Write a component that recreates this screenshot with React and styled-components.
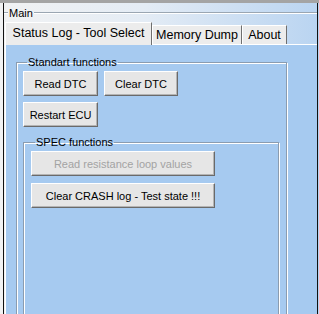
import styled, { createGlobalStyle } from "styled-components";

const GlobalStyle = createGlobalStyle`
    html, body {
        margin: 0;
        padding: 0;
        background: #f0f0f0;
    }
    body {
        font-family: "Liberation Sans", Arial, sans-serif;
    }
`;

const App = () => {
    return (
        <Screen>
            <GlobalStyle />
            <Window>
                <MainHeader>
                    <HeaderLine $lead />
                    <HeaderLabel>Main</HeaderLabel>
                    <HeaderLine />
                </MainHeader>
                <TabStrip>
                    <Tab $active $w={147}>Status Log - Tool Select</Tab>
                    <Tab $w={90}>Memory Dump</Tab>
                    <Tab $w={45}>About</Tab>
                </TabStrip>
                <Panel>
                    <Group $w={271} $h={300}>
                        <Legend>Standart functions</Legend>
                        <ButtonRow>
                            <Button $w={75}>Read DTC</Button>
                            <Button $w={74}>Clear DTC</Button>
                        </ButtonRow>
                        <ButtonRow>
                            <Button $w={75}>Restart ECU</Button>
                        </ButtonRow>
                        <SubGroup $w={256} $h={200}>
                            <Legend>SPEC functions</Legend>
                            <ButtonStack>
                                <Button $w={184} disabled>Read resistance loop values</Button>
                                <Button $w={184}>Clear CRASH log - Test state !!!</Button>
                            </ButtonStack>
                        </SubGroup>
                    </Group>
                </Panel>
            </Window>
        </Screen>
    );
};

const Screen = styled.div`
    width: 319px;
    height: 314px;
    overflow: hidden;
    box-sizing: border-box;
    border-top: 3px solid #a4a4a4;
    background: linear-gradient(to right, #f1f2f3 0%, #e4ecf5 45%, #b9d4f1 100%);
`;

const Window = styled.div`
    margin-left: 3px;
    width: 315px;
    height: 311px;
    box-sizing: border-box;
    border-left: 1px solid #111;
    border-right: 1px solid #111;
    display: flex;
    flex-direction: column;
`;

const MainHeader = styled.div`
    display: flex;
    align-items: center;
    height: 18px;
    padding-top: 2px;
    box-sizing: border-box;
`;

const HeaderLine = styled.div`
    flex: ${(p) => (p.$lead ? "0 0 4px" : "1")};
    height: 0;
    border-top: 1px solid #9aa6b2;
    border-bottom: 1px solid #ffffff;
`;

const HeaderLabel = styled.span`
    font-size: 11px;
    line-height: 13px;
    color: #000;
    padding: 0 1px;
`;

const TabStrip = styled.div`
    display: flex;
    align-items: flex-end;
    height: 22px;
    margin-top: 1px;
    padding-left: 1px;
    position: relative;
    z-index: 1;
`;

const Tab = styled.div`
    box-sizing: border-box;
    width: ${(p) => p.$w}px;
    height: ${(p) => (p.$active ? 23 : 19)}px;
    margin-bottom: ${(p) => (p.$active ? -1 : 0)}px;
    background: #ececec;
    border-top: 1px solid #ffffff;
    border-left: 1px solid #ffffff;
    border-right: 1px solid #6f6f6f;
    font-size: 12.5px;
    line-height: ${(p) => (p.$active ? 20 : 18)}px;
    color: #000;
    text-align: center;
    white-space: nowrap;
`;

const Panel = styled.div`
    flex: 1;
    margin-left: 1px;
    background: #a6caf0;
    border-left: 1px solid #ffffff;
    border-top: 1px solid #ffffff;
    padding: 12px 0 0 10px;
    overflow: hidden;
`;

const Group = styled.fieldset`
    margin: 0;
    box-sizing: border-box;
    width: ${(p) => p.$w}px;
    height: ${(p) => p.$h}px;
    min-width: 0;
    padding: 3px 6px 0 6px;
    border: 1px solid #8a9cb0;
    box-shadow: inset 1px 1px 0 #ffffff, 1px 1px 0 #ffffff;
`;

const SubGroup = styled(Group)`
    margin-top: 10px;
    padding: 3px 7px 0 7px;
`;

const Legend = styled.legend`
    font-size: 11px;
    line-height: 11px;
    color: #000;
    padding: 0 1px;
    margin-left: 4px;
`;

const ButtonRow = styled.div`
    display: flex;
    gap: 6px;
    margin-bottom: 6px;
`;

const ButtonStack = styled.div`
    display: flex;
    flex-direction: column;
    gap: 7px;
`;

const Button = styled.button`
    box-sizing: border-box;
    width: ${(p) => p.$w}px;
    height: 25px;
    margin: 0;
    padding: 0;
    background: #e6e6e6;
    border: 1px solid;
    border-color: #ffffff #6a6a6a #6a6a6a #ffffff;
    box-shadow: inset -1px -1px 0 #b4b4b4;
    font-family: "Liberation Sans", Arial, sans-serif;
    font-size: 11px;
    color: #000;
    white-space: nowrap;

    &:disabled {
        color: #a3a3a3;
    }
`;

export default App;
